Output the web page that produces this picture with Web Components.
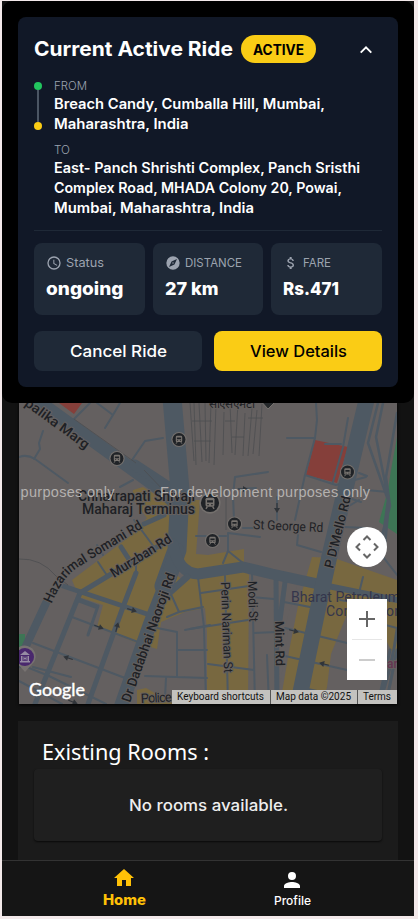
<!DOCTYPE html>
<html lang="en"><head><meta charset="utf-8"><title>Active Ride</title>
<style>
html,body{margin:0;height:919px;overflow:hidden;background:#f3e9ea}
body{font-family:Inter,Lato,"Noto Sans",sans-serif;color:#fff}
</style></head><body>
<ride-app></ride-app>
<script>
const define=(name,html,after)=>customElements.define(name,class extends HTMLElement{
  constructor(){super();this.attachShadow({mode:'open'}).innerHTML=html}
  connectedCallback(){if(after)after.call(this)}
});

/* A single line of text stretched or condensed to fill the given width. */
define('fit-line',`<style>:host{display:block;white-space:nowrap}span{display:inline-block;transform-origin:0 50%}</style><span><slot></slot></span>`,function(){
  const s=this.shadowRoot.querySelector('span'),w=+this.getAttribute('w');
  const n=s.getBoundingClientRect().width;
  this.style.width=w+'px';
  s.style.width=n+'px';
  s.style.transform='scaleX('+(w/n).toFixed(4)+')';
});

define('ride-badge',`<style>:host{display:flex;align-items:center;justify-content:center;width:75px;height:28px;border-radius:14px;background:#facc15;color:#000;font-size:14px;font-weight:700}</style><slot></slot>`);

define('ride-route',`<style>
:host{display:flex;gap:12px;margin-top:13px}
.rail{width:8px;display:flex;flex-direction:column;align-items:center;padding-top:4px}
i{width:8px;height:8px;border-radius:50%;background:#22c55e}i:last-child{background:#facc15}
b{width:2px;height:32px;background:#4b5563}
.stops{display:flex;flex-direction:column;gap:8px}
.k{font-size:12px;line-height:16px;color:#9ca3af;font-weight:300}
.v{font-size:14px;line-height:20px;font-weight:600}
</style>
<div class="rail"><i></i><b></b><i></i></div>
<div class="stops"><div><fit-line class="k" w="33">FROM</fit-line>
<fit-line class="v" w="271">Breach Candy, Cumballa Hill, Mumbai,</fit-line><fit-line class="v" w="134.5">Maharashtra, India</fit-line></div>
<div><fit-line class="k" w="16">TO</fit-line>
<fit-line class="v" w="306">East- Panch Shrishti Complex, Panch Sristhi</fit-line><fit-line class="v" w="288">Complex Road, MHADA Colony 20, Powai,</fit-line><fit-line class="v" w="200">Mumbai, Maharashtra, India</fit-line></div></div>`);

define('ride-stat',`<style>
:host{display:block;box-sizing:border-box;height:72px;padding:12px;border-radius:8px;background:#1f2937}
.k{display:flex;gap:4px;align-items:center;height:16px;font-size:12px;line-height:16px;color:#9ca3af;font-weight:400}
.k ::slotted(fit-line){margin-top:-1px}
.v{margin-top:4px;font-size:18px;line-height:28px;font-weight:800}
</style><div class="k"><slot name="icon"></slot><slot name="label"></slot></div><div class="v"><slot></slot></div>`);

define('ride-button',`<style>
:host{display:flex;align-items:center;justify-content:center;height:40px;border-radius:8px;background:#1f2937;color:#fff;font-size:16px;line-height:22px;padding-bottom:1px;box-sizing:border-box;font-weight:500}
:host([primary]){background:#facc15;color:#000}
</style><slot></slot>`);

define('ride-card',`<style>
:host{display:block;box-sizing:border-box;height:402px;padding:16px;background:#000;border-radius:10px}
.card{box-sizing:border-box;height:370px;padding:16px;border-radius:8px;background:#111827}
header{display:flex;align-items:center;gap:8px;height:32px}
.t{font-size:20px;font-weight:700;line-height:28px}
header svg{margin:2px 8px 0 auto}
hr{height:1px;margin:12px 0;border:0;background:#1f2937}
.stats{display:grid;grid-template-columns:111px 110px 111px;gap:8px}
.act{display:grid;grid-template-columns:1fr 1fr;gap:12px;margin-top:16px}
</style><div class="card">
<header><fit-line class="t" w="199">Current Active Ride</fit-line><ride-badge><fit-line w="51">ACTIVE</fit-line></ride-badge>
<svg width="16" height="16" viewBox="0 0 16 16" fill="none" stroke="#fff" stroke-width="1.9"><path d="M2.7 10.7 8 5.4l5.3 5.3"/></svg></header>
<ride-route></ride-route><hr>
<div class="stats">
<ride-stat><svg slot="icon" width="16" height="16" viewBox="0 0 24 24" fill="#9ca3af"><path d="M12 2a10 10 0 1 0 0 20 10 10 0 0 0 0-20zm0 18a8 8 0 1 1 0-16 8 8 0 0 1 0 16zm.5-13H11v6l5.2 3.2.8-1.3-4.5-2.7z"/></svg><fit-line slot="label" w="38">Status</fit-line><fit-line w="77.5">ongoing</fit-line></ride-stat>
<ride-stat><svg slot="icon" width="16" height="16" viewBox="0 0 24 24" fill="#9ca3af"><path d="M12 10.9a1.1 1.1 0 1 0 0 2.2 1.1 1.1 0 0 0 0-2.2zM12 2a10 10 0 1 0 0 20 10 10 0 0 0 0-20zm2.2 12.2L6 18l3.8-8.2L18 6z"/></svg><fit-line slot="label" w="57">DISTANCE</fit-line><fit-line w="53.5">27 km</fit-line></ride-stat>
<ride-stat><svg slot="icon" width="16" height="16" viewBox="0 0 24 24" fill="#9ca3af"><path d="M11.8 10.9c-2.27-.59-3-1.2-3-2.15 0-1.09 1.01-1.85 2.7-1.85 1.78 0 2.44.85 2.5 2.1h2.21c-.07-1.72-1.12-3.3-3.21-3.81V3h-3v2.16c-1.94.42-3.5 1.68-3.5 3.61 0 2.31 1.91 3.46 4.7 4.13 2.5.6 3 1.48 3 2.41 0 .69-.49 1.79-2.7 1.79-2.06 0-2.87-.92-2.98-2.1h-2.2c.12 2.19 1.76 3.42 3.68 3.83V21h3v-2.15c1.95-.37 3.5-1.5 3.5-3.55 0-2.84-2.43-3.81-4.7-4.4z"/></svg><fit-line slot="label" w="28">FARE</fit-line><fit-line w="56">Rs.471</fit-line></ride-stat>
</div>
<div class="act"><ride-button><fit-line w="97">Cancel Ride</fit-line></ride-button><ride-button primary><fit-line w="97">View Details</fit-line></ride-button></div>
</div>`);

define('station-map',`<style>
:host{display:block;height:301px;margin:0 17px;box-shadow:0 1px 3px #000}
svg{display:block}
.r{fill:none;stroke:#4e5963;stroke-linejoin:round;stroke-linecap:round}
.y{fill:#786840}
.l{font-family:Roboto,sans-serif;fill:#1e2125;font-weight:500;stroke:#64605f;stroke-width:2px;paint-order:stroke;stroke-linejoin:round}
.a{fill:#303439}
</style>
<svg width="378" height="301" viewBox="19 403 378 301">
<defs><g id="bus"><circle r="7.6" fill="#74706d"/><circle r="6.5" fill="#202327"/><rect x="-3.2" y="-3.8" width="6.4" height="6.4" rx="1.2" fill="#77736f"/><path d="M-2.1-2h4.2v1.7h-4.2zM-1.9.8h1V1.6h-1zM.9.8h1V1.6h-1z" fill="#202327"/><path d="M-2.9 4.2l1-1.6M2.9 4.2l-1-1.6" stroke="#77736f"/></g>
<path id="arr" class="a" d="M-5-.6H0V-3L5 0 0 3V.6H-5z"/><path id="haz" d="M51.500 604Q63 577 77 568L146 526"/></defs>
<rect x="19" y="403" width="378" height="301" fill="#646060"/>
<path fill="#853f3a" d="M59 403h23l-8 11zM315 440l33 7-11 36-31-8z"/>
<path fill="#3d7555" d="M397 437l-6 33-3 20-9 32 18 12zM161 485l9-4v8zM19 634h6v12l-6 5z"/>
<g class="y"><path d="M133 490l10-3 29 18v65l-35 73-40-16 6-22-24-8-7-17 57-43 18-19-15-20z"/>
<path d="M190 500h10l-4 54 12 1 36-6v20l5 6-1 129h-41v-72l-2-24-20 4-24 10-4 27-13-4 10-28z"/>
<path d="M312 557l22 1 63 22v80h-15l-8-12-14-2-18-3-7 23-14 38h-41l10-58 8-40z"/><path d="M137 690l9-2 28 16h-37z"/></g>
<path fill="#646060" d="M174 572q10-5 20 2l-12 6zM250 575l48 7-13 45 3 7-11 70h-27zM331 654l-6 50h72v-42l-12-24-26-4-6-20h-6l-8 20z"/>
<g class="r" stroke-width="2">
<path d="M43 431l-4 12 1 6-6 10M19 457q8-3 16 2l33 24M90 403l-17 17M97 403l16 12-8 13M120 403l-7 12M163 438l-18 3-15 22M120 487l13-7"/>
<path d="M316 403l1 17-2 18-10 37-10 45M287 438h28M348 418l-5 29-10 35M325 444h16M305 475l31 10 30-8M298 535l-1 10 24 7M366 490l22 2M359 500l-20 12M366 528l-22-1M359 473l8 3M352 499l9 3"/>
<path d="M235 477l33-5M235 477l-2 18 1 25M238 489l18-1M277 497v23M228 533l32 4M196 536h30M228 533v18l-5 12M228 551l15 12M243 528h12"/>
<path d="M378 403l-10 40 20 57-7 50M383 403l-7 34 13 66-4 42M397 413l-11 64 4 29-10 36" stroke-width="2.500"/>
<path d="M72 617l66 25M33 643l92 35M19 664l30 12 57 28M33 667l38 10M19 681l43 23M136 555v16l-5 18M98 562l10 15M97 545l6 10M134 520l20 27"/>
<path d="M170 592l9 20 24-5M179 612l-12 5M198 577l6 50 2 75M157 628l20 4v44M185 630l25-5M177 650h30M145 676l62 2M166 678l-1 20"/>
<path d="M225 576l3 128M252 572l3 132M201 593l48-7M190 629l58-9M254 633l22-1M208 664l46 6M252 597l22 2M284 602l26 5M285 628l62 15M285 656l62 14M267 655l2 49M308 689l40 9M348 615l49 13M340 600l35 6M363 577l-4 16M380 553l17 22"/>
<path d="M397 630q-5 38-18 74M397 650l-11 54M390 650l-12 54" stroke-width="3"/>
</g>
<g class="r" stroke-width="5" stroke-linecap="butt"><path d="M63 586l84 28M80 593l-45 111M136 573l-13 34-35 97M79 600l16 6M121 547l9 14"/><path d="M98 606l-10 29" stroke-width="3"/><path d="M80 593l33-20 54-32M144 524l20-9"/><path d="M276 577l1 127M285 582l-5 38"/></g>
<g class="r"><path d="M119 540L78 567Q62 577 53 597L19 678" stroke-width="8" stroke-opacity=".0"/><path d="M46 603L25 648 19 664" stroke-width="8"/>
<path d="M31 396l130 94 16 15" stroke-width="13"/><path d="M135 465l35 23" stroke-width="11"/>
<path d="M172 398l4 46 4 46-3 60-13 36" stroke-width="19"/><path d="M177 550l-12 36-15 38-30 85" stroke-width="14"/>
<path d="M173 544q5 29 25 30l45-7 29 7 46 10" stroke-width="11"/><path d="M187 577l-18 16" stroke-width="7"/><path d="M318 584l79 16" stroke-width="6"/>
<path d="M367 398l-38 160-12 55-20 96" stroke-width="16"/></g>
<path d="M136 463l-62-44M144 470l22 23M190 403l4 58M194 403l2 62M199 403l3 59M205 403l1 58M211 403l-2 60M216 405l-2 60M224 412l-1 43M230 403l2 50M238 403l-3 52M245 413l-2 43M252 408l-4 48M257 410l-4 44M262 404l-3 52M192 421h20M194 441h17M225 421h10M232 437h12M248 418h15M19 559q22-1 37 17l12 9M226 490v40" fill="none" stroke="#4d4e50" stroke-width=".8"/>
<use href="#arr" transform="translate(132 610) rotate(16)"/><use href="#arr" transform="translate(99 627) rotate(20)"/><use href="#arr" transform="translate(117 627) rotate(-76)"/><use href="#arr" transform="translate(68 658) rotate(198)"/><use href="#arr" transform="translate(73 702) rotate(20)"/><use href="#arr" transform="translate(277 508) rotate(90)"/><use href="#arr" transform="translate(243 489)"/><use href="#arr" transform="translate(294 631) rotate(14)"/><use href="#arr" transform="translate(324 664) rotate(194)"/>
<g class="l" font-size="13">
<text transform="translate(24 405) rotate(36)" textLength="76" lengthAdjust="spacingAndGlyphs" font-size="13.500">palika Marg</text>
<text font-size="13.500"><textPath href="#haz" textLength="122" lengthAdjust="spacingAndGlyphs">Hazarimal Somani Rd</textPath></text>
<text transform="translate(114 578) rotate(-32)" textLength="69" lengthAdjust="spacingAndGlyphs" font-size="13.500">Murzban Rd</text>
<text transform="translate(130 703) rotate(-70.500)" textLength="136" lengthAdjust="spacingAndGlyphs" font-size="13.500">Dr Dadabhai Naoroji Rd</text>
<text transform="translate(333 569) rotate(-76)" textLength="74" lengthAdjust="spacingAndGlyphs">P D'Mello Rd</text>
<text transform="translate(253 529) rotate(2.500)" textLength="70" lengthAdjust="spacingAndGlyphs" font-weight="400">St George Rd</text>
<text transform="translate(221 582) rotate(88)" textLength="91" lengthAdjust="spacingAndGlyphs" font-weight="400" font-size="12.500">Perin Nariman St</text>
<text transform="translate(248 581) rotate(88)" textLength="41" lengthAdjust="spacingAndGlyphs" font-weight="400" font-size="12.500">Modi St</text>
<text transform="translate(275 621) rotate(89)" textLength="45" lengthAdjust="spacingAndGlyphs" font-size="12.500">Mint Rd</text>
<text x="78" y="500.500" textLength="117" lengthAdjust="spacingAndGlyphs" font-size="14">Chhatrapati Shivaji</text><text x="82" y="514" textLength="113" lengthAdjust="spacingAndGlyphs" font-size="14">Maharaj Terminus</text>
<text transform="translate(141 703) rotate(-3)" textLength="31" font-weight="400">Police</text>
<text x="208" y="408" textLength="46" font-size="12" font-weight="400">सीएसएमटी</text>
<g style="fill:#34364c;stroke:none" font-weight="400"><text x="291" y="602" textLength="109" lengthAdjust="spacingAndGlyphs" font-size="14">Bharat Petroleum</text><text x="326" y="616" textLength="76" font-size="14">Corporation</text></g>
<text x="387" y="668" font-size="12" style="fill:#653551">ar</text></g>
<path d="M259 399l9 10 10-10z" fill="#25282b" stroke="#77736f"/>
<use href="#bus" x="117" y="458.500"/><use href="#bus" x="179" y="439.500"/><use href="#bus" x="347.500" y="472"/><use href="#bus" x="234.500" y="524"/><use href="#bus" x="212.500" y="540.500"/><use href="#bus" transform="translate(210 503) scale(1.4)"/>
<path d="M14 657a10.800 10.800 0 1 1 20 5l-9 10-9-10z" fill="#777271"/><circle cx="25" cy="657" r="9" fill="#49286d"/><path d="M20 655l5-4 5 4zM21 656h1.500v5H21zm6.500 0H29v5h-1.500zM20 661h10v1.500H20zM23.500 656.500v4h.9v-1.500h1.200v1.500h.9v-4h-.9v1.500h-1.200v-1.500z" fill="#968ca4"/>
<g font-family="Liberation Sans,sans-serif" font-size="14.500" fill="#b4b1af"><text x="20.500" y="497" textLength="94">purposes only</text><text x="160" y="497" textLength="210">For development purposes only</text></g>
<text x="29" y="696" textLength="56" lengthAdjust="spacingAndGlyphs" font-family="Lato,sans-serif" font-size="17.500" font-weight="400" fill="#fff" stroke="#fff" stroke-width=".4">Google</text>
<rect x="172" y="690" width="225" height="14" fill="#c3c2bf"/><path d="M270.500 690v14M357.500 690v14" stroke="#555"/>
<g font-family="Roboto,sans-serif" font-size="10" fill="#111"><text x="177" y="700" textLength="87">Keyboard shortcuts</text><text x="276" y="700" textLength="75">Map data ©2025</text><text x="363" y="700" textLength="28">Terms</text></g>
<circle cx="367" cy="547" r="20" fill="#fff"/><path d="M363.500 540l3.500-3.500 3.500 3.500M363.500 554l3.500 3.500 3.500-3.500M360 543.500l-3.500 3.500 3.500 3.500M374 543.500l3.500 3.500-3.500 3.500" fill="none" stroke="#666" stroke-width="2"/>
<rect x="347" y="599" width="40" height="81" fill="#fff"/><path d="M352 639.500h30" stroke="#e6e6e6"/><path d="M359 619h16M367 611v16" stroke="#666" stroke-width="2"/><path d="M359 660h16" stroke="#ccc" stroke-width="2"/>
</svg>`);

define('room-list',`<style>
:host{display:block;box-sizing:border-box;height:139px;margin:17px 16px 0;padding:14px 16px 16px;background:#1b1b1b}
.t{height:34px;padding-left:8px;line-height:32px;font-family:"Noto Sans",sans-serif;font-size:22px}
.e{display:flex;align-items:center;justify-content:center;height:72px;border-radius:4px;background:#1f1f1f;box-shadow:0 1px 2px #000a;font-size:16px;font-weight:500;color:#eee;line-height:24px;padding-bottom:1px;box-sizing:border-box}
</style><fit-line class="t" w="167">Existing Rooms :</fit-line><div class="e"><fit-line w="159">No rooms available.</fit-line></div>`);

define('tab-bar',`<style>
:host{display:grid;grid-template-columns:168px 168px;justify-content:center;box-sizing:border-box;height:56px;border-top:1px solid #333;background:#151515;font-size:12px;font-weight:500}
div{display:flex;flex-direction:column;align-items:center;padding-top:5px}
.h{color:#ffc107;font-size:14px;font-weight:800}
.x{line-height:20px}svg{display:block}
.p{margin-top:-1px}.u{margin-top:2px}
</style><div class="h"><svg width="24" height="24" viewBox="0 0 24 24" fill="#ffc107"><path d="M10 20v-6h4v6h5v-8h3L12 3 2 12h3v8z"/></svg><fit-line class="x" w="43">Home</fit-line></div>
<div><svg class="u" width="24" height="24" viewBox="0 0 24 24" fill="#fff"><path d="M12 12a4 4 0 1 0 0-8 4 4 0 0 0 0 8zm0 2c-2.670 0-8 1.340-8 4v2h16v-2c0-2.660-5.330-4-8-4z"/></svg><fit-line class="x p" w="37">Profile</fit-line></div>`);

define('ride-app',`<style>
:host{display:block;box-sizing:border-box;height:919px;padding:1px 4px 3px 2px}
main{height:915px;background:#121212;overflow:hidden}
</style><main><ride-card></ride-card><station-map></station-map><room-list></room-list><tab-bar></tab-bar></main>`);
</script>
</body></html>
